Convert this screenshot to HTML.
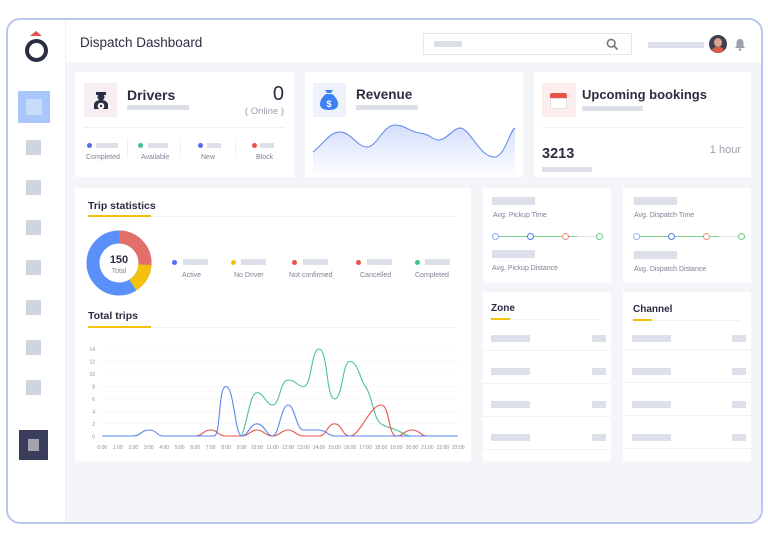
<!DOCTYPE html>
<html><head><meta charset="utf-8"><style>
*{margin:0;padding:0;box-sizing:border-box}
body{width:768px;height:541px;background:#fff;font-family:"Liberation Sans",sans-serif;position:relative;overflow:hidden;color:#2b2d42}
.a{position:absolute}
.card{position:absolute;background:#fff}
.bar{position:absolute;background:#dde0e8}
.t{position:absolute;white-space:nowrap}
.sm{font-size:7px;color:#7d8194}
.sq{position:absolute;left:26px;width:15px;height:15px;background:#cfd5df}
.dot{position:absolute;width:5px;height:5px;border-radius:50%}
.ring{position:absolute;width:7px;height:7px;border-radius:50%;border:1.3px solid;background:#fff}
</style></head><body>
<div class="a" style="left:6px;top:18px;width:757px;height:506px;border:2px solid #b9c7f0;border-radius:14px;background:#fff;overflow:hidden">
<div class="a" style="left:57px;top:42px;width:700px;height:470px;background:#f3f5f9"></div>
<div class="a" style="left:57px;top:0;width:1px;height:500px;background:#eef0f5"></div>
</div>
<!-- sidebar -->
<div class="a" style="left:30px;top:31px;width:0;height:0;border-left:6px solid transparent;border-right:6px solid transparent;border-bottom:5px solid #e5534b"></div>
<div class="a" style="left:25px;top:39px;width:23px;height:23px;border-radius:50%;border:4.5px solid #2b2d42"></div>
<div class="a" style="left:18px;top:91px;width:32px;height:32px;background:#a9c7fb"></div>
<div class="a" style="left:26px;top:99px;width:16px;height:16px;background:#c9dbfb"></div>
<div class="sq" style="top:140px"></div><div class="sq" style="top:180px"></div><div class="sq" style="top:220px"></div><div class="sq" style="top:260px"></div><div class="sq" style="top:300px"></div><div class="sq" style="top:340px"></div><div class="sq" style="top:380px"></div>
<div class="a" style="left:19px;top:430px;width:29px;height:30px;background:#3a3e5c"></div>
<div class="a" style="left:28px;top:439px;width:11px;height:12px;background:#a3a4ae"></div>
<!-- header -->
<div class="t" style="left:80px;top:35px;font-size:13.5px;color:#2b2d42">Dispatch Dashboard</div>
<div class="a" style="left:423px;top:33px;width:209px;height:22px;border:1px solid #e4e7ee;background:#fff"></div>
<div class="bar" style="left:434px;top:41px;width:28px;height:6px"></div>
<svg class="a" style="left:606px;top:38px" width="13" height="13" viewBox="0 0 13 13"><circle cx="5.2" cy="5.2" r="3.8" fill="none" stroke="#777" stroke-width="1.6"/><path d="M8 8l3.5 3.5" stroke="#777" stroke-width="1.8"/></svg>
<div class="bar" style="left:648px;top:42px;width:56px;height:6px"></div>
<div class="a" style="left:709px;top:35px;width:18px;height:18px;border-radius:50%;background:#3d4150;overflow:hidden"><div class="a" style="left:5px;top:3px;width:8px;height:9px;border-radius:50%;background:#d9a592"></div><div class="a" style="left:3px;top:12px;width:12px;height:8px;background:#d85a4c;border-radius:4px 4px 0 0"></div></div>
<svg class="a" style="left:734px;top:38px" width="12" height="13" viewBox="0 0 12 13"><path d="M6 1C3.5 1 2.5 3 2.5 5v3L1 10h10L9.5 8V5C9.5 3 8.5 1 6 1z" fill="#9ba0aa"/><circle cx="6" cy="11.5" r="1.3" fill="#9ba0aa"/></svg>
<!-- Drivers -->
<div class="card" style="left:75px;top:72px;width:219px;height:105px">
<div class="a" style="left:9px;top:11px;width:33px;height:34px;background:#f6eef3"></div>
<svg class="a" style="left:16px;top:17px" width="20" height="22" viewBox="0 0 20 22"><path d="M5 3h10v3H5z" fill="#2b2d42"/><circle cx="10" cy="8" r="3.5" fill="#2b2d42"/><path d="M3 20v-4c0-3 3-5 7-5s7 2 7 5v4z" fill="#2b2d42"/><circle cx="10" cy="17" r="3.3" fill="#fff"/><circle cx="10" cy="17" r="1.2" fill="#2b2d42"/></svg>
<div class="t" style="left:52px;top:15px;font-size:14px;font-weight:bold">Drivers</div>
<div class="bar" style="left:52px;top:33px;width:62px;height:5px"></div>
<div class="t" style="right:10px;top:11px;font-size:20px">0</div>
<div class="t" style="right:10px;top:34px;font-size:9.5px;color:#9a9eab">( Online )</div>
<div class="a" style="left:9px;top:55px;width:201px;height:1px;background:#eef0f4"></div>
<div class="dot" style="left:12px;top:71px;background:#4f6ef0"></div><div class="bar" style="left:21px;top:71px;width:22px;height:5px"></div>
<div class="dot" style="left:63px;top:71px;background:#41c294"></div><div class="bar" style="left:73px;top:71px;width:20px;height:5px"></div>
<div class="dot" style="left:123px;top:71px;background:#4f6ef0"></div><div class="bar" style="left:132px;top:71px;width:14px;height:5px"></div>
<div class="dot" style="left:177px;top:71px;background:#e5534b"></div><div class="bar" style="left:185px;top:71px;width:14px;height:5px"></div>
<div class="a" style="left:52px;top:67px;width:1px;height:18px;background:#eef0f4"></div><div class="a" style="left:105px;top:67px;width:1px;height:18px;background:#eef0f4"></div><div class="a" style="left:160px;top:67px;width:1px;height:18px;background:#eef0f4"></div>
<div class="t sm" style="left:11px;top:82px">Completed</div><div class="t sm" style="left:66px;top:82px">Available</div><div class="t sm" style="left:126px;top:82px">New</div><div class="t sm" style="left:181px;top:82px">Block</div>
</div>
<!-- Revenue -->
<div class="card" style="left:305px;top:72px;width:218px;height:105px;overflow:hidden">
<div class="a" style="left:8px;top:11px;width:33px;height:34px;background:#eef2fa"></div>
<svg class="a" style="left:14px;top:16px" width="20" height="24" viewBox="0 0 20 24"><path d="M6 2l2 3h4l2-3z" fill="#3d7ff5"/><path d="M7 6h6c4 3 6 7 6 10 0 4-3 6-9 6S1 20 1 16c0-3 2-7 6-10z" fill="#3d7ff5"/><text x="10" y="19" font-size="9" fill="#fff" text-anchor="middle" font-family="Liberation Sans" font-weight="bold">$</text></svg>
<div class="t" style="left:51px;top:15px;font-size:13.5px;font-weight:bold">Revenue</div>
<div class="bar" style="left:51px;top:33px;width:62px;height:5px"></div>
<svg class="a" style="left:0;top:0" width="218" height="105"><defs><linearGradient id="g" x1="0" y1="0" x2="0" y2="1"><stop offset="0" stop-color="#4f7cf0" stop-opacity=".25"/><stop offset="1" stop-color="#4f7cf0" stop-opacity="0"/></linearGradient></defs>
<path d="M8,80 C20,70 25,60 35,60 C46,60 52,75 62,75 C72,75 78,53 90,53 C100,53 105,60 115,61 C125,62 128,68 133,68 C142,68 148,56 155,56 C165,56 175,86 190,85 C200,84 205,58 210,56 L210,105 L8,105Z" fill="url(#g)"/>
<path d="M8,80 C20,70 25,60 35,60 C46,60 52,75 62,75 C72,75 78,53 90,53 C100,53 105,60 115,61 C125,62 128,68 133,68 C142,68 148,56 155,56 C165,56 175,86 190,85 C200,84 205,58 210,56" fill="none" stroke="#5b84ea" stroke-width="1"/></svg>
</div>
<!-- Upcoming -->
<div class="card" style="left:534px;top:72px;width:217px;height:105px">
<div class="a" style="left:8px;top:11px;width:34px;height:34px;background:#fdeeee"></div>
<div class="a" style="left:16px;top:21px;width:17px;height:5px;background:#e5534b;border-radius:2px 2px 0 0"></div>
<div class="a" style="left:16px;top:26px;width:17px;height:11px;background:#fff;border:1px solid #e6e0e0"></div>
<div class="t" style="left:48px;top:15px;font-size:13px;font-weight:bold">Upcoming bookings</div>
<div class="bar" style="left:48px;top:34px;width:61px;height:5px"></div>
<div class="a" style="left:8px;top:55px;width:201px;height:1px;background:#eef0f4"></div>
<div class="t" style="left:8px;top:74px;font-size:14.5px;font-weight:bold">3213</div>
<div class="bar" style="left:8px;top:95px;width:50px;height:5px"></div>
<div class="t" style="right:10px;top:72px;font-size:11px;color:#9a9eab">1 hour</div>
</div>
<!-- Trip stats -->
<div class="card" style="left:75px;top:188px;width:396px;height:273px">
<div class="t" style="left:13px;top:12px;font-size:10.5px;font-weight:bold">Trip statistics</div>
<div class="a" style="left:13px;top:27px;width:63px;height:2px;background:#f4c20d"></div>
<div class="a" style="left:76px;top:28px;width:305px;height:1px;background:#f0f1f5"></div>
<svg class="a" style="left:11px;top:42px" width="66" height="66" viewBox="0 0 66 66"><g transform="rotate(-90 33 33)"><circle cx="33" cy="33" r="26" fill="none" stroke="#5b8ff9" stroke-width="13"/><circle cx="33" cy="33" r="26" fill="none" stroke="#e36f6b" stroke-width="13" stroke-dasharray="42.5 200"/><circle cx="33" cy="33" r="26" fill="none" stroke="#f4c20d" stroke-width="13" stroke-dasharray="0 42.5 24.5 200"/></g>
<text x="33" y="33" text-anchor="middle" font-size="11" font-weight="bold" fill="#2b2d42" font-family="Liberation Sans">150</text><text x="33" y="43" text-anchor="middle" font-size="7" fill="#8a8e9c" font-family="Liberation Sans">Total</text></svg>
<div class="dot" style="left:97px;top:72px;background:#4f6ef0"></div><div class="bar" style="left:108px;top:71px;width:25px;height:6px"></div>
<div class="dot" style="left:156px;top:72px;background:#f4c20d"></div><div class="bar" style="left:166px;top:71px;width:25px;height:6px"></div>
<div class="dot" style="left:217px;top:72px;background:#e5534b"></div><div class="bar" style="left:228px;top:71px;width:25px;height:6px"></div>
<div class="dot" style="left:281px;top:72px;background:#e5534b"></div><div class="bar" style="left:292px;top:71px;width:25px;height:6px"></div>
<div class="dot" style="left:340px;top:72px;background:#41c294"></div><div class="bar" style="left:350px;top:71px;width:25px;height:6px"></div>
<div class="t sm" style="left:107px;top:84px">Active</div><div class="t sm" style="left:159px;top:84px">No Driver</div><div class="t sm" style="left:214px;top:84px">Not confirmed</div><div class="t sm" style="left:285px;top:84px">Cancelled</div><div class="t sm" style="left:340px;top:84px">Completed</div>
<div class="t" style="left:13px;top:122px;font-size:10.5px;font-weight:bold">Total trips</div>
<div class="a" style="left:13px;top:138px;width:63px;height:2px;background:#f4c20d"></div>
<div class="a" style="left:76px;top:139px;width:305px;height:1px;background:#f0f1f5"></div>
</div>
<svg class="a" style="left:0;top:0" width="768" height="541" font-family="Liberation Sans" font-size="5" fill="#8a8e9c">
<g stroke="#f1f2f6" stroke-width=".6">
<line x1="102" y1="349" x2="458" y2="349"/><line x1="102" y1="361.5" x2="458" y2="361.5"/><line x1="102" y1="374" x2="458" y2="374"/><line x1="102" y1="386.5" x2="458" y2="386.5"/><line x1="102" y1="399" x2="458" y2="399"/><line x1="102" y1="411.4" x2="458" y2="411.4"/><line x1="102" y1="423.8" x2="458" y2="423.8"/>
</g>
<g text-anchor="end"><text x="95" y="351">14</text><text x="95" y="363.5">12</text><text x="95" y="376">10</text><text x="95" y="388.5">8</text><text x="95" y="401">6</text><text x="95" y="413.4">4</text><text x="95" y="425.8">2</text><text x="95" y="438.3">0</text></g>
<g text-anchor="middle"><text x="102.3" y="449">0:00</text><text x="117.8" y="449">1:00</text><text x="133.3" y="449">2:00</text><text x="148.7" y="449">3:00</text><text x="164.2" y="449">4:00</text><text x="179.7" y="449">5:00</text><text x="195.2" y="449">6:00</text><text x="210.7" y="449">7:00</text><text x="226.1" y="449">8:00</text><text x="241.6" y="449">9:00</text><text x="257.1" y="449">10:00</text><text x="272.6" y="449">11:00</text><text x="288.1" y="449">12:00</text><text x="303.5" y="449">13:00</text><text x="319" y="449">14:00</text><text x="334.5" y="449">15:00</text><text x="350" y="449">16:00</text><text x="365.5" y="449">17:00</text><text x="381" y="449">18:00</text><text x="396.4" y="449">19:00</text><text x="411.9" y="449">20:00</text><text x="427.4" y="449">21:00</text><text x="442.9" y="449">22:00</text><text x="458.3" y="449">23:00</text></g>
<g fill="none" stroke-width="1.1">
<path d="M241.6,436 C248,420 250,392.7 257,392.7 C264,392.7 266,405 272.6,405 C280,405 280,380 288,380 C296,380 297,386.5 303.5,386.5 C312,386.5 311,349 319,349 C328,349 326,398.9 334.5,398.9 C343,398.9 342,361.5 350,361.5 C358,361.5 360,380 365.5,386.5 C372,395 374,420 381,423.8 C388,428 392,428 396.4,430 C402,432 405,436 412,436" stroke="#4cc392"/>
<path d="M195,436 C203,436 203,430 210.7,430 C218,430 218,436 226,436 L241.6,436 C249,436 250,430 257,430 C264,430 265,436 272.6,436 C280,436 281,430 288,430 C295,430 296,436 303.5,436 L319,436 C327,436 327,423.8 334.5,423.8 C342,423.8 342,436 350,436 C360,436 370,405 381,405 C390,405 388,436 396.4,436 C404,436 404,430 412,430 C420,430 420,436 427.4,436" stroke="#e5534b"/>
<path d="M102,436 L133,436 C141,436 141,430 149,430 C157,430 156,436 164,436 L214,436 C221,436 218,386.5 226,386.5 C234,386.5 235,436 241.6,436 C248,436 250,423.8 257,423.8 C264,423.8 267,436 272.6,436 C279,436 281,405 288,405 C295,405 296,430 303.5,430 C310,430 312,430 319,430 C326,430 328,436 334.5,436 L458,436" stroke="#5b84ea"/>
</g></svg>
<!-- Avg cards -->
<div class="card" style="left:483px;top:188px;width:128px;height:95px">
<div class="bar" style="left:9px;top:9px;width:43px;height:8px"></div>
<div class="t sm" style="left:10px;top:24px">Avg. Pickup Time</div>
<div class="a" style="left:12px;top:48px;width:82px;height:1px;background:#7cd08e"></div><div class="a" style="left:94px;top:48px;width:23px;height:1px;background:#e3e5ea"></div>
<div class="ring" style="left:9px;top:45px;border-color:#8fb0f7"></div><div class="ring" style="left:44px;top:45px;border-color:#4f7cf0"></div><div class="ring" style="left:79px;top:45px;border-color:#ef8d7f"></div><div class="ring" style="left:113px;top:45px;border-color:#6ccf83"></div>
<div class="bar" style="left:9px;top:62px;width:43px;height:8px"></div>
<div class="t sm" style="left:9px;top:77px">Avg. Pickup Distance</div>
</div>
<div class="card" style="left:623px;top:188px;width:128px;height:95px">
<div class="bar" style="left:11px;top:9px;width:43px;height:8px"></div>
<div class="t sm" style="left:11px;top:24px">Avg. Dispatch Time</div>
<div class="a" style="left:14px;top:48px;width:82px;height:1px;background:#7cd08e"></div><div class="a" style="left:96px;top:48px;width:23px;height:1px;background:#e3e5ea"></div>
<div class="ring" style="left:10px;top:45px;border-color:#8fb0f7"></div><div class="ring" style="left:45px;top:45px;border-color:#4f7cf0"></div><div class="ring" style="left:80px;top:45px;border-color:#ef8d7f"></div><div class="ring" style="left:115px;top:45px;border-color:#6ccf83"></div>
<div class="bar" style="left:11px;top:63px;width:43px;height:8px"></div>
<div class="t sm" style="left:11px;top:78px">Avg. Dispatch Distance</div>
</div>
<!-- Zone / Channel -->
<div class="card" style="left:483px;top:292px;width:128px;height:169px">
<div class="t" style="left:8px;top:11px;font-size:10px;font-weight:bold">Zone</div>
<div class="a" style="left:8px;top:26px;width:19px;height:2px;background:#f4c20d"></div><div class="a" style="left:27px;top:27px;width:88px;height:1px;background:#f0f1f5"></div>
<div class="bar" style="left:8px;top:43px;width:39px;height:7px"></div><div class="bar" style="left:109px;top:43px;width:14px;height:7px"></div><div class="a" style="left:0;top:58px;width:128px;height:1px;background:#f1f2f5"></div>
<div class="bar" style="left:8px;top:76px;width:39px;height:7px"></div><div class="bar" style="left:109px;top:76px;width:14px;height:7px"></div><div class="a" style="left:0;top:91px;width:128px;height:1px;background:#f1f2f5"></div>
<div class="bar" style="left:8px;top:109px;width:39px;height:7px"></div><div class="bar" style="left:109px;top:109px;width:14px;height:7px"></div><div class="a" style="left:0;top:124px;width:128px;height:1px;background:#f1f2f5"></div>
<div class="bar" style="left:8px;top:142px;width:39px;height:7px"></div><div class="bar" style="left:109px;top:142px;width:14px;height:7px"></div><div class="a" style="left:0;top:157px;width:128px;height:1px;background:#f1f2f5"></div>
</div>
<div class="card" style="left:623px;top:292px;width:128px;height:169px">
<div class="t" style="left:10px;top:12px;font-size:10px;font-weight:bold">Channel</div>
<div class="a" style="left:10px;top:27px;width:19px;height:2px;background:#f4c20d"></div><div class="a" style="left:29px;top:28px;width:88px;height:1px;background:#f0f1f5"></div>
<div class="bar" style="left:9px;top:43px;width:39px;height:7px"></div><div class="bar" style="left:109px;top:43px;width:14px;height:7px"></div><div class="a" style="left:0;top:57px;width:128px;height:1px;background:#f1f2f5"></div>
<div class="bar" style="left:9px;top:76px;width:39px;height:7px"></div><div class="bar" style="left:109px;top:76px;width:14px;height:7px"></div><div class="a" style="left:0;top:90px;width:128px;height:1px;background:#f1f2f5"></div>
<div class="bar" style="left:9px;top:109px;width:39px;height:7px"></div><div class="bar" style="left:109px;top:109px;width:14px;height:7px"></div><div class="a" style="left:0;top:123px;width:128px;height:1px;background:#f1f2f5"></div>
<div class="bar" style="left:9px;top:142px;width:39px;height:7px"></div><div class="bar" style="left:109px;top:142px;width:14px;height:7px"></div><div class="a" style="left:0;top:156px;width:128px;height:1px;background:#f1f2f5"></div>
</div>
</body></html>
